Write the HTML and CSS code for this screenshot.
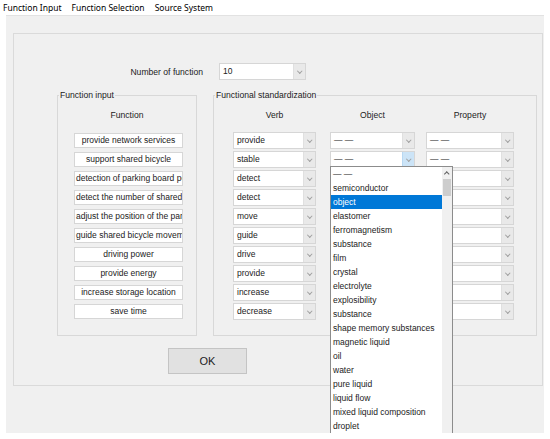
FILE: index.html
```html
<!DOCTYPE html>
<html lang="en">
<head>
  <meta charset="UTF-8" />
  <title>Function Input</title>
  <link rel="stylesheet" href="styles.css">
</head>
<body>

<div class="menubar">
  <span>Function Input</span>
  <span>Function Selection</span>
  <span>Source System</span>
</div>

<div class="window">
  <div class="panel">

    <div class="numrow">
      <span class="numlabel">Number of function</span>
      <div class="combo num"><span class="val">10</span><span class="arrow"></span></div>
    </div>

    <div class="groups">
      <fieldset class="group input-group">
        <legend>Function input</legend>
        <div class="colhead">Function</div>
        <div class="fn-list">
          <div class="fn">provide network services</div>
          <div class="fn">support shared bicycle</div>
          <div class="fn">detection of parking board position</div>
          <div class="fn">detect the number of shared bicycles</div>
          <div class="fn">adjust the position of the parking board</div>
          <div class="fn">guide shared bicycle movement</div>
          <div class="fn">driving power</div>
          <div class="fn">provide energy</div>
          <div class="fn">increase storage location</div>
          <div class="fn">save time</div>
        </div>
      </fieldset>

      <fieldset class="group std-group">
        <legend>Functional standardization</legend>
        <div class="std-grid std-head">
          <div class="colhead">Verb</div>
          <div class="colhead">Object</div>
          <div class="colhead">Property</div>
        </div>
        <div class="std-grid std-body">
          <div class="combo"><span class="val">provide</span><span class="arrow"></span></div>
          <div class="combo"><span class="val">— —</span><span class="arrow"></span></div>
          <div class="combo"><span class="val">— —</span><span class="arrow"></span></div>

          <div class="combo"><span class="val">stable</span><span class="arrow"></span></div>
          <div class="combo open"><span class="val">— —</span><span class="arrow"></span>
            <div class="droplist">
              <div class="items">
                <div class="item">— —</div>
                <div class="item">semiconductor</div>
                <div class="item selected">object</div>
                <div class="item">elastomer</div>
                <div class="item">ferromagnetism</div>
                <div class="item">substance</div>
                <div class="item">film</div>
                <div class="item">crystal</div>
                <div class="item">electrolyte</div>
                <div class="item">explosibility</div>
                <div class="item">substance</div>
                <div class="item">shape memory substances</div>
                <div class="item">magnetic liquid</div>
                <div class="item">oil</div>
                <div class="item">water</div>
                <div class="item">pure liquid</div>
                <div class="item">liquid flow</div>
                <div class="item">mixed liquid composition</div>
                <div class="item">droplet</div>
              </div>
              <div class="scrollbar">
                <div class="sb-up"></div>
                <div class="sb-thumb"></div>
              </div>
            </div>
          </div>
          <div class="combo"><span class="val">— —</span><span class="arrow"></span></div>

          <div class="combo"><span class="val">detect</span><span class="arrow"></span></div>
          <div class="combo"><span class="val"></span><span class="arrow"></span></div>
          <div class="combo"><span class="val"></span><span class="arrow"></span></div>

          <div class="combo"><span class="val">detect</span><span class="arrow"></span></div>
          <div class="combo"><span class="val"></span><span class="arrow"></span></div>
          <div class="combo"><span class="val"></span><span class="arrow"></span></div>

          <div class="combo"><span class="val">move</span><span class="arrow"></span></div>
          <div class="combo"><span class="val"></span><span class="arrow"></span></div>
          <div class="combo"><span class="val"></span><span class="arrow"></span></div>

          <div class="combo"><span class="val">guide</span><span class="arrow"></span></div>
          <div class="combo"><span class="val"></span><span class="arrow"></span></div>
          <div class="combo"><span class="val"></span><span class="arrow"></span></div>

          <div class="combo"><span class="val">drive</span><span class="arrow"></span></div>
          <div class="combo"><span class="val"></span><span class="arrow"></span></div>
          <div class="combo"><span class="val"></span><span class="arrow"></span></div>

          <div class="combo"><span class="val">provide</span><span class="arrow"></span></div>
          <div class="combo"><span class="val"></span><span class="arrow"></span></div>
          <div class="combo"><span class="val"></span><span class="arrow"></span></div>

          <div class="combo"><span class="val">increase</span><span class="arrow"></span></div>
          <div class="combo"><span class="val"></span><span class="arrow"></span></div>
          <div class="combo"><span class="val"></span><span class="arrow"></span></div>

          <div class="combo"><span class="val">decrease</span><span class="arrow"></span></div>
          <div class="combo"><span class="val"></span><span class="arrow"></span></div>
          <div class="combo"><span class="val"></span><span class="arrow"></span></div>
        </div>
      </fieldset>
    </div>

    <div class="okrow"><button class="ok">OK</button></div>

  </div>
</div>

</body>
</html>
```

FILE: styles.css
```css
body {
  margin: 0;
  background: #fff;
  font-family: 'Liberation Sans', Arial, sans-serif;
  font-size: 8.5px;
  color: #222;
  overflow: hidden;
}

/* top menu */
.menubar {
  height: 15px;
  display: flex;
  align-items: center;
  gap: 10px;
  padding-left: 3px;
  font-family: 'Noto Sans', sans-serif;
  font-size: 8.5px;
  color: #000;
}

/* window body */
.window {
  margin-left: 6px;
  width: 538px;
  height: 418px;
  box-sizing: border-box;
  background: #f0f0f0;
  border-top: 1px solid #e2e2e2;
  padding: 17px 0 0 7px;
}
.panel {
  width: 530px;
  height: 353px;
  box-sizing: border-box;
  border: 1px solid #dadada;
}

.numrow {
  margin-top: 29px;
  display: flex;
  align-items: center;
  gap: 16px;
}
.numlabel {
  width: 189px;
  text-align: right;
  font-size: 8.6px;
}

/* combo boxes */
.combo {
  position: relative;
  display: flex;
  height: 17px;
  box-sizing: border-box;
  background: #fff;
  border: 1px solid #d6d6d6;
}
.combo.num {
  width: 87px;
}
.combo .val {
  flex: 1;
  padding-left: 3px;
  line-height: 15px;
  white-space: nowrap;
  overflow: hidden;
}
.combo .arrow {
  width: 11px;
  background: #e9e9e9;
  border-left: 1px solid #e0e0e0;
  display: flex;
  align-items: center;
  justify-content: center;
}
.combo .arrow::after {
  content: '';
  width: 2.5px;
  height: 2.5px;
  border-right: 1px solid #a0a0a0;
  border-bottom: 1px solid #a0a0a0;
  transform: rotate(45deg);
  margin-top: -2px;
}
.combo.open .arrow {
  background: #cce4f7;
  border-left-color: #b8d8f2;
}

/* group boxes */
.groups {
  display: flex;
  margin-top: 10px;
}
.group {
  margin: 0;
  padding: 0;
  min-width: 0;
  height: 246px;
  box-sizing: border-box;
  border: 1px solid #d8d8d8;
}
.group legend {
  padding: 0 1px;
  margin-left: 1px;
  line-height: 10px;
  font-size: 8.6px;
}
.input-group {
  margin-left: 43px;
  width: 140px;
}
.std-group {
  margin-left: 16px;
  width: 324px;
}
.colhead {
  margin-top: 9px;
  line-height: 12px;
  text-align: center;
  font-size: 8.6px;
}

.fn-list {
  margin: 12px 0 0 16px;
  width: 109px;
  display: flex;
  flex-direction: column;
  gap: 4px;
}
.fn {
  height: 15px;
  box-sizing: border-box;
  background: #fff;
  border: 1px solid #d6d6d6;
  line-height: 13px;
  text-align: center;
  white-space: nowrap;
  overflow: hidden;
}
.fn:nth-child(3), .fn:nth-child(4), .fn:nth-child(5), .fn:nth-child(6) {
  text-align: left;
  padding-left: 1px;
}

.std-grid {
  display: grid;
  grid-template-columns: 83px 85px 85px;
  column-gap: 14px;
  padding-left: 19px;
}
.std-grid > :nth-child(3n) {
  margin-left: -3px;
}
.std-body {
  margin-top: 11px;
  row-gap: 2px;
}

/* open dropdown list */
.droplist {
  position: absolute;
  top: 14px;
  left: -1px;
  width: 123px;
  height: 272px;
  box-sizing: border-box;
  background: #fff;
  border: 1px solid #8c8c8c;
  border-bottom: 0;
  display: flex;
  z-index: 10;
}
.items {
  flex: 1;
}
.item {
  height: 14px;
  line-height: 14px;
  padding-left: 2px;
  white-space: nowrap;
  overflow: hidden;
}
.item.selected {
  background: #0078d7;
  color: #fff;
}
.scrollbar {
  width: 10px;
  background: #f0f0f0;
}
.sb-up {
  height: 11px;
  display: flex;
  align-items: center;
  justify-content: center;
}
.sb-up::after {
  content: '';
  width: 2.5px;
  height: 2.5px;
  border-left: 1px solid #606060;
  border-top: 1px solid #606060;
  transform: rotate(45deg);
  margin-top: 2px;
}
.sb-thumb {
  margin: 1px 1px 0;
  height: 17px;
  background: #cdcdcd;
}

/* OK button */
.okrow {
  margin: 12px 0 0 154px;
}
.ok {
  width: 79px;
  height: 26px;
  background: #e1e1e1;
  border: 1px solid #c4c4c4;
  font-family: 'Liberation Sans', Arial, sans-serif;
  font-size: 11px;
  color: #222;
  padding: 0;
}
```
